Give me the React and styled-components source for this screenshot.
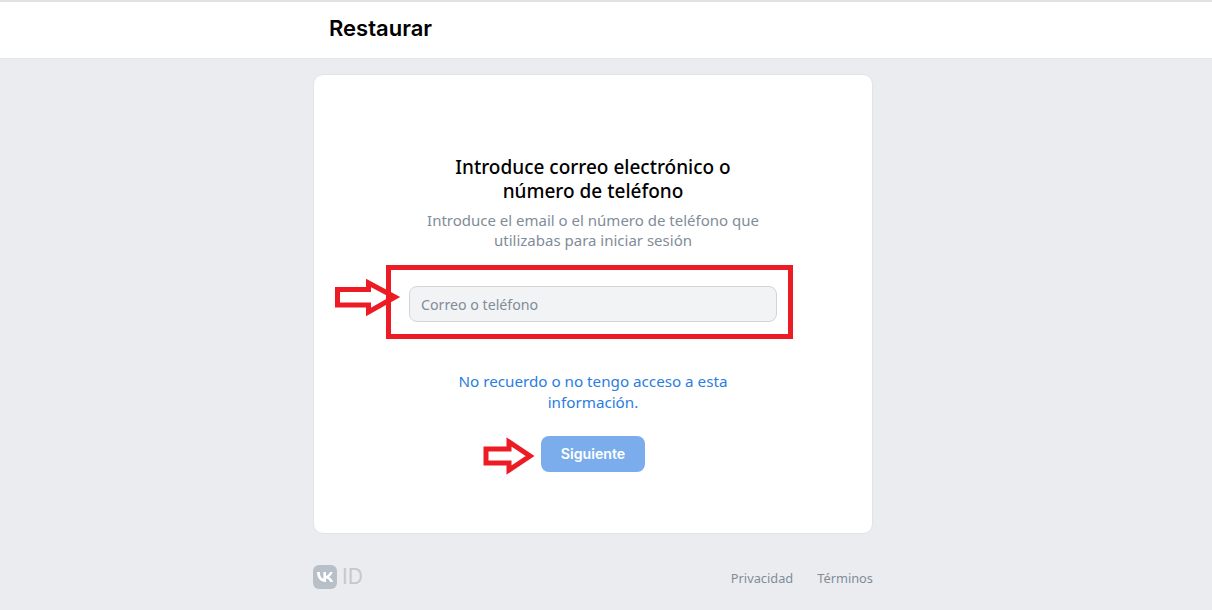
import React from 'react';
import styled, { createGlobalStyle } from 'styled-components';

const GlobalStyle = createGlobalStyle`
  html, body {
    margin: 0;
    padding: 0;
    background: #ebecf0;
    font-family: "Noto Sans", "Liberation Sans", sans-serif;
  }
`;

const Page = styled.div`
  position: relative;
  width: 1212px;
  height: 610px;
  overflow: hidden;
`;

const Header = styled.header`
  box-sizing: border-box;
  height: 59px;
  background: #fff;
  border-top: 2px solid #e1e2e4;
  border-bottom: 1px solid #e4e5e9;
  padding-left: 329px;
`;

const HeaderTitle = styled.h1`
  margin: 0;
  font-family: Inter, sans-serif;
  font-size: 22px;
  font-weight: 600;
  line-height: 53px;
  color: #000;
`;

const Main = styled.main`
  width: 560px;
  margin: 15px 0 0 313px;
`;

const Card = styled.section`
  box-sizing: border-box;
  height: 460px;
  background: #fff;
  border: 1px solid #e2e3e7;
  border-radius: 10px;
  padding-top: 80px;
  display: flex;
  flex-direction: column;
  align-items: center;
`;

const Title = styled.h2`
  margin: 0;
  width: 300px;
  font-size: 19px;
  font-weight: 500;
  line-height: 24px;
  text-align: center;
  color: #000;
`;

const Subtitle = styled.p`
  margin: 7px 0 0;
  width: 360px;
  font-size: 15px;
  line-height: 20px;
  text-align: center;
  color: #818c99;
`;

const Input = styled.input`
  box-sizing: border-box;
  width: 368px;
  height: 36px;
  margin-top: 36px;
  padding: 0 11px;
  background: #f2f3f5;
  border: 1px solid #d3d4d7;
  border-radius: 8px;
  font-family: inherit;
  font-size: 14.2px;

  &::placeholder {
    color: #818c99;
    opacity: 1;
  }
`;

const HelpLink = styled.a`
  display: block;
  width: 300px;
  margin-top: 49px;
  font-size: 15.2px;
  line-height: 21px;
  text-align: center;
  color: #2a7de1;
  text-decoration: none;
`;

const NextButton = styled.button`
  width: 104px;
  height: 36px;
  margin-top: 23px;
  padding: 0 0 2px;
  border: 0;
  border-radius: 8px;
  background: #7badec;
  color: #fff;
  font-family: Inter, sans-serif;
  font-size: 14.2px;
  font-weight: 600;
`;

const Footer = styled.footer`
  display: flex;
  align-items: center;
  justify-content: space-between;
  margin-top: 31px;
`;

const Logo = styled.div`
  display: flex;
  align-items: center;
  gap: 5px;
`;

const LogoText = styled.span`
  font-family: Inter, sans-serif;
  font-size: 21px;
  line-height: 24px;
  color: #c4c8cc;
`;

const FooterLinks = styled.nav`
  display: flex;
  gap: 24px;
  padding-top: 2px;
`;

const FooterLink = styled.a`
  font-size: 12.8px;
  color: #818c99;
  text-decoration: none;
`;

const RedFrame = styled.div`
  position: absolute;
  left: 386px;
  top: 265px;
  width: 407px;
  height: 74px;
  box-sizing: border-box;
  border: 5px solid #ed1c24;
`;

const ArrowSvg = styled.svg`
  position: absolute;
  left: ${(p) => p.$left}px;
  top: ${(p) => p.$top}px;
`;

function Arrow({ left, top, width, height, points }) {
  return (
    <ArrowSvg $left={left} $top={top} width={width} height={height}>
      <polygon points={points} fill="none" stroke="#ed1c24" strokeWidth="5" />
    </ArrowSvg>
  );
}

function VkLogo() {
  return (
    <svg width="24" height="24" viewBox="0 0 24 24">
      <rect width="24" height="24" rx="6" fill="#b8bfc9" />
      <path
        d="M12.8 17C7.3 17 4.200 13.200 4 7h2.800c.1 4.500 2.100 6.400 3.600 6.800V7h2.600v3.900c1.600-.2 3.300-2 3.900-3.900h2.600c-.4 2.400-2.200 4.200-3.500 5 1.300.6 3.300 2.200 4.100 5h-2.900c-.6-1.900-2.100-3.300-4.200-3.500V17z"
        fill="#fff"
      />
    </svg>
  );
}

function App() {
  return (
    <Page>
      <GlobalStyle />
      <Header>
        <HeaderTitle>Restaurar</HeaderTitle>
      </Header>
      <Main>
        <Card>
          <Title>Introduce correo electrónico o número de teléfono</Title>
          <Subtitle>
            Introduce el email o el número de teléfono que utilizabas para iniciar sesión
          </Subtitle>
          <Input placeholder="Correo o teléfono" />
          <HelpLink href="#">No recuerdo o no tengo acceso a esta información.</HelpLink>
          <NextButton>Siguiente</NextButton>
        </Card>
        <Footer>
          <Logo>
            <VkLogo />
            <LogoText>ID</LogoText>
          </Logo>
          <FooterLinks>
            <FooterLink href="#">Privacidad</FooterLink>
            <FooterLink href="#">Términos</FooterLink>
          </FooterLinks>
        </Footer>
      </Main>
      <RedFrame />
      <Arrow left={333} top={275} width={70} height={44} points="4.500,14.500 35.500,14.500 35.500,8 62,22 35.500,37 35.500,30 4.500,30" />
      <Arrow left={482} top={436} width={56} height={40} points="4,13 27,13 27,6 48,20 27,34 27,27 4,27" />
    </Page>
  );
}

export default App;
